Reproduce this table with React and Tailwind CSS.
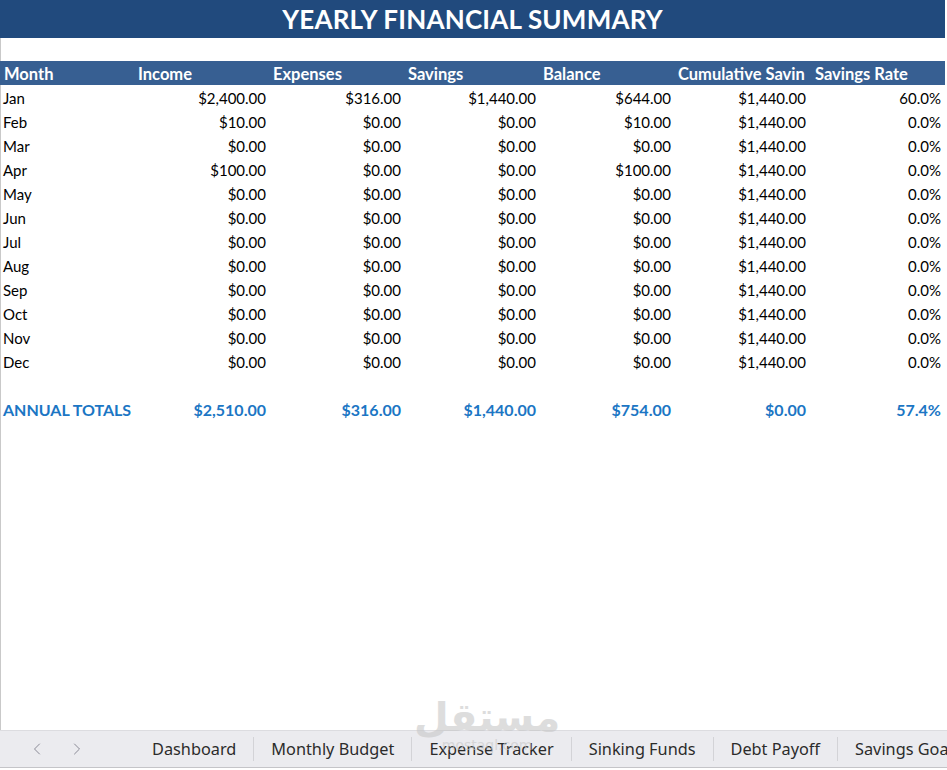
import React from "react";
import { ChevronLeft, ChevronRight } from "lucide-react";

const rows = [
  ["Jan", "$2,400.00", "$316.00", "$1,440.00", "$644.00", "$1,440.00", "60.0%"],
  ["Feb", "$10.00", "$0.00", "$0.00", "$10.00", "$1,440.00", "0.0%"],
  ["Mar", "$0.00", "$0.00", "$0.00", "$0.00", "$1,440.00", "0.0%"],
  ["Apr", "$100.00", "$0.00", "$0.00", "$100.00", "$1,440.00", "0.0%"],
  ["May", "$0.00", "$0.00", "$0.00", "$0.00", "$1,440.00", "0.0%"],
  ["Jun", "$0.00", "$0.00", "$0.00", "$0.00", "$1,440.00", "0.0%"],
  ["Jul", "$0.00", "$0.00", "$0.00", "$0.00", "$1,440.00", "0.0%"],
  ["Aug", "$0.00", "$0.00", "$0.00", "$0.00", "$1,440.00", "0.0%"],
  ["Sep", "$0.00", "$0.00", "$0.00", "$0.00", "$1,440.00", "0.0%"],
  ["Oct", "$0.00", "$0.00", "$0.00", "$0.00", "$1,440.00", "0.0%"],
  ["Nov", "$0.00", "$0.00", "$0.00", "$0.00", "$1,440.00", "0.0%"],
  ["Dec", "$0.00", "$0.00", "$0.00", "$0.00", "$1,440.00", "0.0%"],
];

const totals = ["ANNUAL TOTALS", "$2,510.00", "$316.00", "$1,440.00", "$754.00", "$0.00", "57.4%"];
const headers = ["Month", "Income", "Expenses", "Savings", "Balance", "Cumulative Savin", "Savings Rate"];
const tabs = ["Dashboard", "Monthly Budget", "Expense Tracker", "Sinking Funds", "Debt Payoff", "Savings Goals"];

function Row({ cells, className }) {
  return (
    <div className={"grid grid-cols-[135px_135px_135px_135px_135px_135px_135px] h-6 items-center pt-[2px] " + (className || "")}>
      {cells.map((c, i) => (
        <div key={i} className={"overflow-hidden whitespace-nowrap " + (i === 0 ? "pl-[3px] text-left" : "pr-[4px] text-right")}>
          {c}
        </div>
      ))}
    </div>
  );
}

export default function App() {
  return (
    <div className="w-[947px] h-[770px] bg-white flex flex-col overflow-hidden relative" style={{ fontFamily: "Lato, 'Open Sans', sans-serif" }}>
      <div className="h-[730px] flex flex-col">
        <div className="h-[38px] w-[945px] bg-[#214a7d] flex items-center justify-center text-white font-bold text-[26px] tracking-[0.2px]">
          YEARLY FINANCIAL SUMMARY
        </div>
        <div className="flex-1 border-l border-[#c9c9c9] flex flex-col">
          <div className="h-[23px]" />
          <div className="w-[945px] -ml-px bg-[#375f92] text-white font-bold text-[16.5px] h-6 flex items-center pt-[3px]">
            <div className="grid grid-cols-[135px_135px_135px_135px_135px_135px_135px] w-full">
              {headers.map((h, i) => (
                <div key={i} className={"overflow-hidden whitespace-nowrap " + (i === 0 ? "pl-[4px]" : i === 6 ? "pl-[5px]" : "pl-[3px]")}>{h}</div>
              ))}
            </div>
          </div>
          <div className="-ml-px text-[15px] text-black">
            {rows.map((r, i) => (
              <Row key={i} cells={r} />
            ))}
            <div className="h-6" />
            <Row cells={totals} className="font-bold text-[16px] text-[#1b76c4]" />
          </div>
        </div>
      </div>
      <div className="h-[38px] bg-[#ebebef] border-t border-[#dcdce0] border-b border-b-[#c4c4c8] flex items-center text-[16.3px] text-[#2b2b2b]" style={{ fontFamily: "'Noto Sans', 'Open Sans', sans-serif" }}>
        <div className="w-[135px] flex items-center pl-[27px] gap-[20px] text-[#8a8a96] shrink-0">
          <ChevronLeft size={20} strokeWidth={1.2} />
          <ChevronRight size={20} strokeWidth={1.2} />
        </div>
        {tabs.map((t, i) => (
          <div key={i} className="flex items-center whitespace-nowrap shrink-0">
            {i > 0 && <div className="w-px h-[24px] bg-[#d3d3d7]" />}
            <div className="px-[17px]">{t}</div>
          </div>
        ))}
      </div>
      <div className="h-[2px] bg-white" />
      <div className="absolute left-[414px] top-[697px] flex flex-col items-center pointer-events-none text-[#c8c8c8] opacity-60">
        <div className="text-[40px] leading-[40px] font-bold" style={{ fontFamily: "'DejaVu Sans', sans-serif" }}>مستقل</div>
        <div className="text-[14px] leading-[14px] mt-[1px]" style={{ fontFamily: "'DejaVu Sans', sans-serif" }}>mostaql.com</div>
      </div>
    </div>
  );
}
